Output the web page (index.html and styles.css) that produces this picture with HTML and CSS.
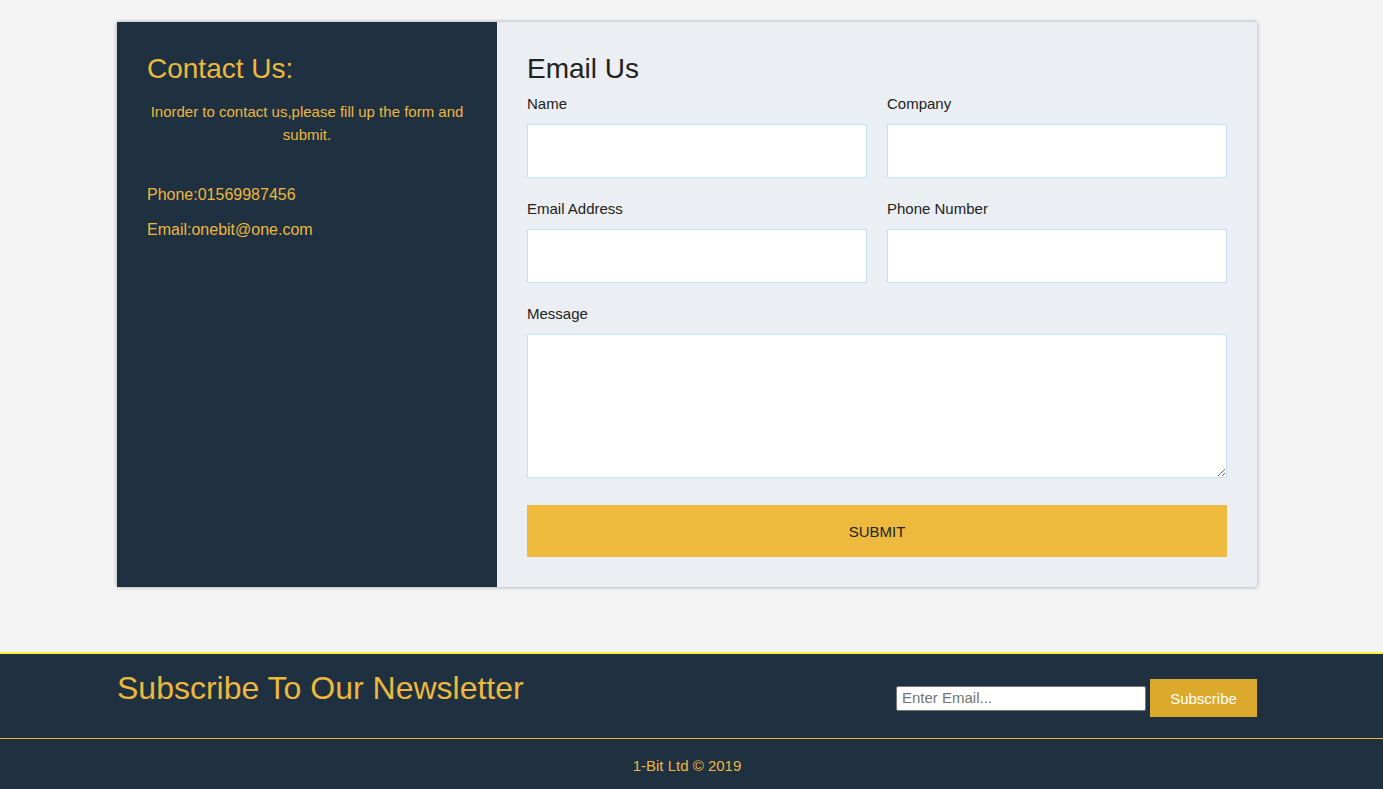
FILE: index.html
```html
<!DOCTYPE html>
<html>
<head>
<meta charset="utf-8">
<title>Contact</title>
<link rel="stylesheet" href="styles.css">
</head>
<body>
<main class="page">
  <section class="contact-box">
    <div class="info">
      <h3 class="info-title">Contact Us:</h3>
      <p class="info-text">Inorder to contact us,please fill up the form and submit.</p>
      <ul class="info-list">
        <li>Phone:01569987456</li>
        <li>Email:onebit@one.com</li>
      </ul>
    </div>
    <div class="form-wrap">
      <h3 class="form-title">Email Us</h3>
      <form class="form">
        <div class="field">
          <label>Name</label>
          <input type="text">
        </div>
        <div class="field">
          <label>Company</label>
          <input type="text">
        </div>
        <div class="field">
          <label>Email Address</label>
          <input type="text">
        </div>
        <div class="field">
          <label>Phone Number</label>
          <input type="text">
        </div>
        <div class="field full">
          <label>Message</label>
          <textarea></textarea>
        </div>
        <div class="field full">
          <button type="button" class="submit">SUBMIT</button>
        </div>
      </form>
    </div>
  </section>
</main>
<footer class="footer">
  <div class="newsletter">
    <h2 class="news-title">Subscribe To Our Newsletter</h2>
    <form class="news-form">
      <input type="text" class="news-input" placeholder="Enter Email...">
      <button type="button" class="news-btn">Subscribe</button>
    </form>
  </div>
  <div class="copy">1-Bit Ltd &copy; 2019</div>
</footer>
</body>
</html>
```

FILE: styles.css
```css
* { box-sizing: border-box; }
html, body { margin: 0; padding: 0; }
body {
  background: #f4f4f4;
  font-family: "Liberation Sans", Arial, sans-serif;
  color: #222;
}
.page {
  padding-top: 22px;
  padding-bottom: 65px;
}
.contact-box {
  width: 1140px;
  margin-left: calc((100% - 1149px) / 2);
  display: grid;
  grid-template-columns: 380px 760px;
  box-shadow: 0 0 4px rgba(0,0,0,0.35);
}
.info {
  background: #1f3041;
  color: #ecb83d;
  padding: 30px;
}
.info-title {
  margin: 0;
  font-size: 28px;
  font-weight: normal;
  line-height: 33px;
}
.info-text {
  text-align: center;
  font-size: 15px;
  line-height: 23px;
  margin: 15px 0 0;
}
.info-list {
  list-style: none;
  padding: 0;
  margin: 40px 0 0;
  font-size: 16px;
}
.info-list li {
  line-height: 18px;
  margin-bottom: 17px;
}
.form-wrap {
  background: #ebeff3;
  padding: 30px;
}
.form-title {
  margin: 0;
  font-size: 28px;
  font-weight: normal;
  line-height: 33px;
  color: #222;
}
.form {
  display: grid;
  grid-template-columns: 1fr 1fr;
  column-gap: 20px;
  margin-top: 10px;
}
.field {
  display: flex;
  flex-direction: column;
}
.field.full { grid-column: 1 / 3; }
.field label {
  font-size: 15px;
  line-height: 18px;
  color: #222;
  margin-bottom: 11px;
}
.field input {
  height: 54px;
  border: 1px solid #c6e2f9;
  background: #fff;
  margin-bottom: 22px;
  font-family: inherit;
  padding: 0 8px;
  outline: none;
}
.field textarea {
  height: 144px;
  border: 1px solid #c6e2f9;
  background: #fff;
  margin: 0;
  font-family: inherit;
  display: block;
  outline: none;
}
.submit {
  margin-top: 27px;
  height: 52px;
  background: #edba3d;
  border: 0;
  font-family: inherit;
  font-size: 15px;
  color: #222;
  width: 100%;
}
.footer {
  background: #1f3041;
  border-top: 2px solid #f7f43a;
}
.newsletter {
  width: 1140px;
  margin-left: calc((100% - 1149px) / 2);
  display: flex;
  justify-content: space-between;
  align-items: flex-start;
  height: 84px;
}
.news-title {
  margin: 0;
  padding-top: 16px;
  font-size: 32px;
  line-height: 37px;
  font-weight: normal;
  color: #ecb83d;
}
.news-form {
  display: flex;
  align-items: center;
  gap: 4px;
  padding-top: 25px;
}
.news-input {
  width: 250px;
  height: 25px;
  border: 1px solid #767676;
  border-radius: 2px;
  font-family: inherit;
  font-size: 15px;
  padding: 0 5px 1px;
  background: #fff;
}
.news-input::placeholder { color: #757575; }
.news-btn {
  width: 107px;
  height: 38px;
  background: #dba92c;
  border: 0;
  color: #fff;
  font-family: inherit;
  font-size: 15px;
}
.copy {
  border-top: 1px solid #ecb83d;
  text-align: center;
  color: #ecb83d;
  font-size: 15px;
  height: 51px;
  line-height: 54px;
  padding-right: 9px;
}
```
